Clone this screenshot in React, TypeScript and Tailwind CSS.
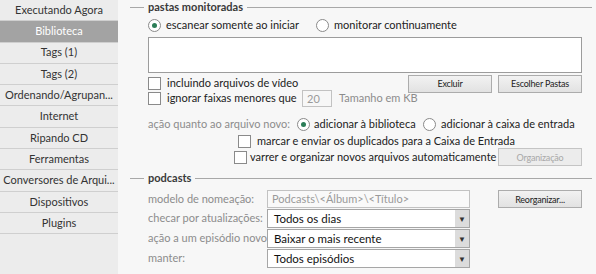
import { ReactNode } from 'react';

const menu = [
  'Executando Agora',
  'Biblioteca',
  'Tags (1)',
  'Tags (2)',
  'Ordenando/Agrupan...',
  'Internet',
  'Ripando CD',
  'Ferramentas',
  'Conversores de Arqui...',
  'Dispositivos',
  'Plugins',
];

const Radio = ({ checked }: { checked?: boolean }) => (
  <span className="w-[13px] h-[13px] rounded-full border border-[#8a8a8a] bg-white flex items-center justify-center shrink-0">
    {checked && <span className="w-[5px] h-[5px] rounded-full bg-[#2b7d57]" />}
  </span>
);

const Check = () => (
  <span className="w-[13px] h-[13px] border border-[#8a8a8a] bg-white shrink-0" />
);

const Btn = ({ children, disabled }: { children: ReactNode; disabled?: boolean }) => (
  <button
    className={`w-[84px] h-[18px] border text-[9px] tracking-[-0.2px] leading-none flex items-center justify-center shrink-0 ${
      disabled
        ? 'border-[#c4c4c4] bg-[#ececec] text-[#a8a8a8]'
        : 'border-[#acacac] bg-gradient-to-b from-[#f2f2f2] to-[#e2e2e2] text-[#222]'
    }`}
  >
    {children}
  </button>
);

const Legend = ({ title }: { title: string }) => (
  <div className="flex items-center h-[14px] -ml-[18px]">
    <span className="w-[14px] h-px bg-[#a8a8a8]" />
    <span className="px-[4px] font-bold text-[#3a3a3a]">{title}</span>
    <span className="flex-1 h-px bg-[#a8a8a8]" />
  </div>
);

const Select = ({ value }: { value: string }) => (
  <div className="w-[203px] h-[19px] border border-[#a6a6a6] bg-white flex items-center">
    <span className="flex-1 pl-[6px] text-[11.5px] text-[#111]">{value}</span>
    <span className="w-[14px] h-full bg-[#dcdcdc] flex items-center justify-center text-[8px] text-[#333]">
      ▼
    </span>
  </div>
);

const Row = ({ label, children }: { label: string; children: ReactNode }) => (
  <div className="flex items-center">
    <span className="w-[119px] text-[#8c8c8c] overflow-hidden">{label}</span>
    {children}
  </div>
);

export default function App() {
  return (
    <div className="flex w-[596px] h-[274px] overflow-hidden whitespace-nowrap bg-[#f7f7f7] text-[11px] text-[#222] [font-family:Lato,sans-serif]">
      <div className="w-[118px] shrink-0 bg-[#ececec]">
        {menu.map((item, i) => (
          <div
            key={item}
            className={`h-[21.3px] border-b border-[#cfcfcf] flex items-center justify-center ${
              i === 1 ? 'bg-[#a3a3a3] text-white' : 'text-[#333]'
            }`}
          >
            {item}
          </div>
        ))}
      </div>

      <div className="flex-1 pl-[30px] pr-[4px]">
        <Legend title="pastas monitoradas" />
        <div className="flex items-center h-[18px] mt-[2px]">
          <Radio checked />
          <span className="ml-[5px] w-[150px]">escanear somente ao iniciar</span>
          <Radio />
          <span className="ml-[5px]">monitorar continuamente</span>
        </div>
        <div className="w-[434px] h-[36px] mt-[3px] border border-[#9c9c9c] bg-white" />
        <div className="flex items-center w-[434px] h-[19px] mt-[1px]">
          <Check />
          <span className="ml-[6px] flex-1">incluindo arquivos de vídeo</span>
          <div className="flex gap-[6px]">
            <Btn>Excluir</Btn>
            <Btn>Escolher Pastas</Btn>
          </div>
        </div>
        <div className="flex items-center h-[17px] mt-[-3px]">
          <Check />
          <span className="ml-[6px] w-[135px]">ignorar faixas menores que</span>
          <span className="w-[30px] h-[17px] border border-[#c2c2c2] bg-[#f7f7f7] text-[#9a9a9a] pl-[4px] leading-[15px]">
            20
          </span>
          <span className="ml-[7px] text-[#8c8c8c]">Tamanho em KB</span>
        </div>

        <div className="flex items-center h-[16px] mt-[9px]">
          <span className="w-[149px] text-[#8c8c8c]">ação quanto ao arquivo novo:</span>
          <Radio checked />
          <span className="ml-[4px] w-[109px]">adicionar à biblioteca</span>
          <Radio />
          <span className="ml-[5px]">adicionar à caixa de entrada</span>
        </div>
        <div className="flex items-center h-[18px] pl-[90px]">
          <Check />
          <span className="ml-[6px]">marcar e enviar os duplicados para a Caixa de Entrada</span>
        </div>
        <div className="flex items-center w-[434px] h-[18px] mt-[-2px] pl-[86px]">
          <Check />
          <span className="ml-[3px] flex-1">varrer e organizar novos arquivos automaticamente</span>
          <Btn disabled>Organização</Btn>
        </div>

        <div className="mt-[5px]">
          <Legend title="podcasts" />
        </div>
        <div className="flex flex-col gap-[1px] mt-[5px]">
          <div className="flex items-center w-[434px]">
            <Row label="modelo de nomeação:">
              <span className="w-[203px] h-[18px] border border-[#c2c2c2] bg-[#f9f9f9] text-[#9a9a9a] pl-[4px] leading-[16px]">
                Podcasts\&lt;Álbum&gt;\&lt;Título&gt;
              </span>
            </Row>
            <span className="flex-1" />
            <Btn>Reorganizar...</Btn>
          </div>
          <Row label="checar por atualizações:">
            <Select value="Todos os dias" />
          </Row>
          <Row label="ação a um episódio novo">
            <Select value="Baixar o mais recente" />
          </Row>
          <Row label="manter:">
            <Select value="Todos episódios" />
          </Row>
        </div>
      </div>
    </div>
  );
}
